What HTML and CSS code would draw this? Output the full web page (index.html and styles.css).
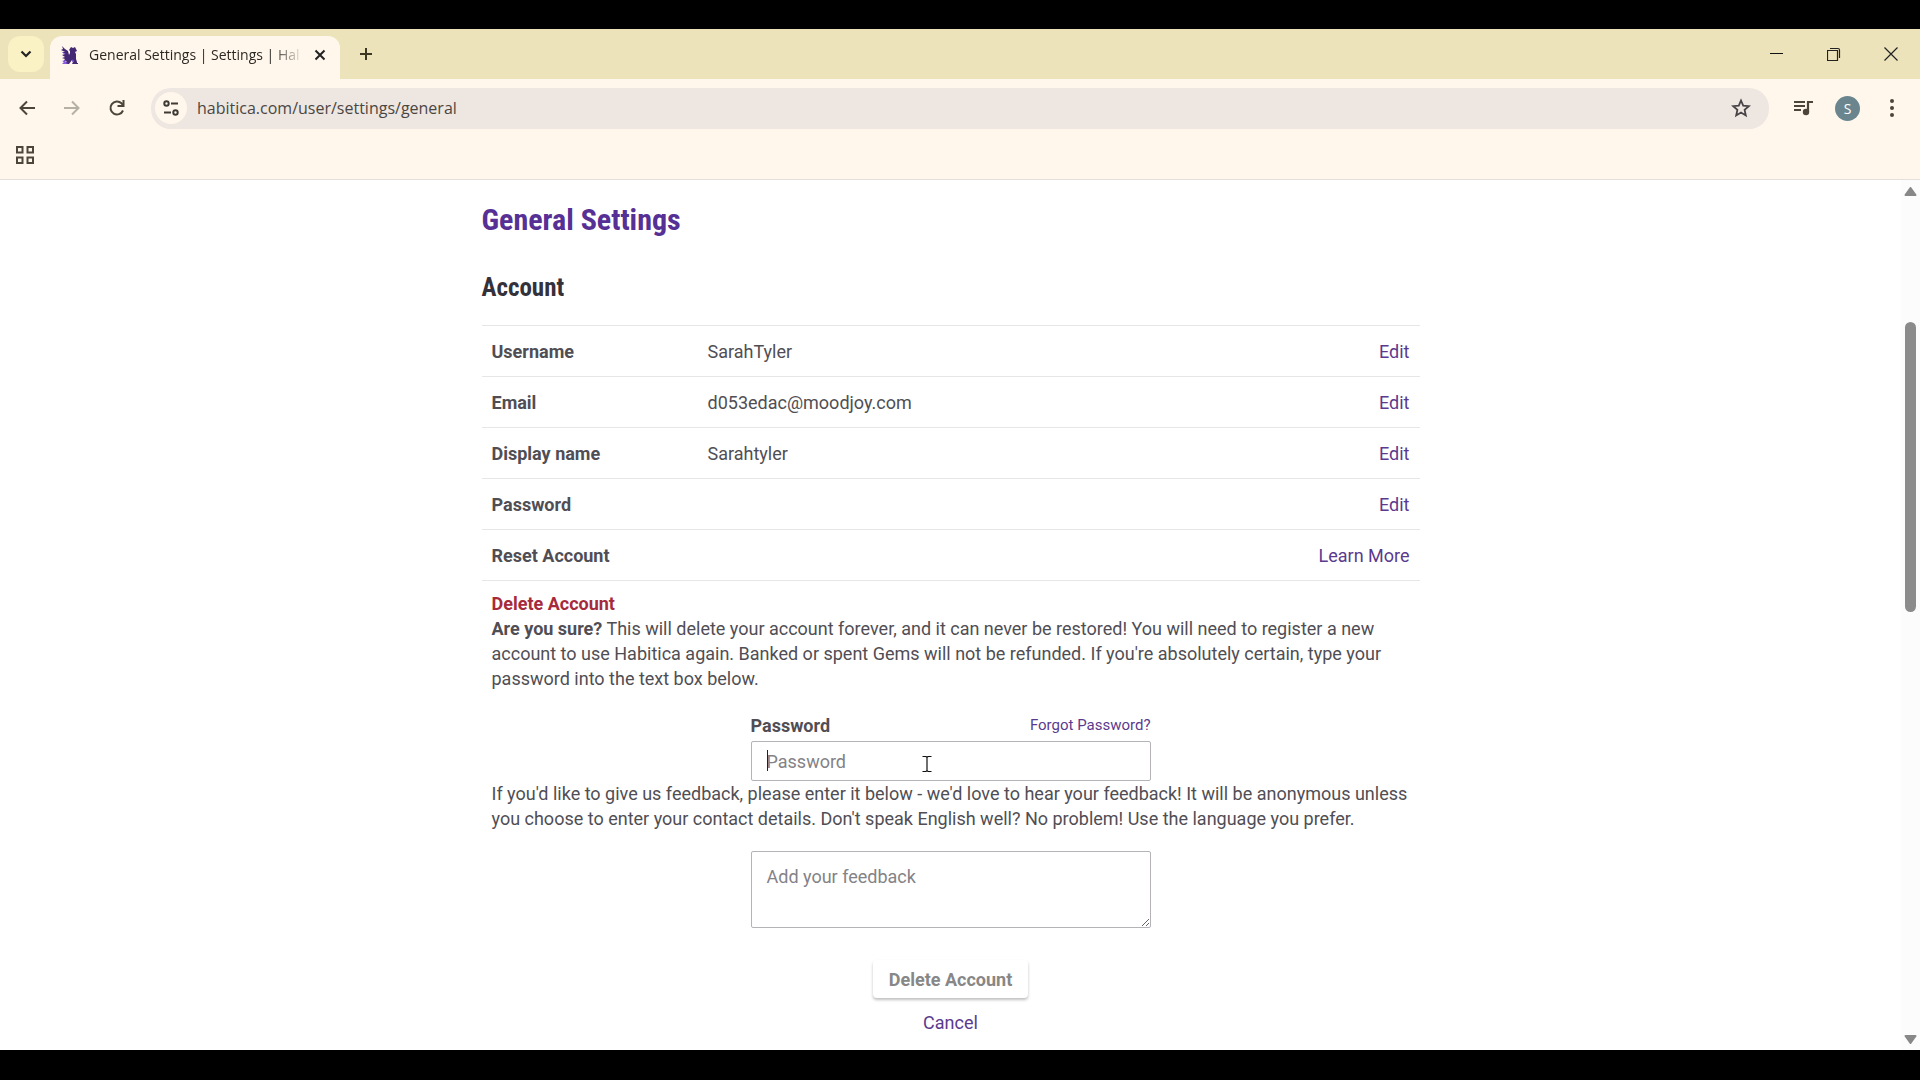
FILE: index.html
```html
<!DOCTYPE html>
<html lang="en">
<head>
    <meta charset="UTF-8">
    <meta name="viewport" content="width=device-width, initial-scale=1.0">
    <title>General Settings | Settings | Habitica</title>
    <link rel="stylesheet" href="styles.css">
</head>
<body>
    <div class="browser">
        <header class="chrome">
            <div class="tab-strip">
                <button type="button" class="tab-search" aria-label="Search tabs">
                    <svg width="12" height="8" viewBox="0 0 12 8"><path d="M1.5 1.5 6 6l4.5-4.5" fill="none" stroke="#222" stroke-width="2.2"/></svg>
                </button>
                <div class="tab">
                    <svg class="favicon" width="18" height="18" viewBox="0 0 18 18">
                        <path fill="#432874" d="M1 0l3 3 3 2 1 4 1-2V5L8 4l2-3 2 1 2-1 1 2 1 2-2 1 1 2v5l1 3v1h1v1h-6l1-2-1-2-3 4H4v-1l2-2-4 1 2-3-3-1 3-1-3-2 3-1-3-2h3L0 4l2-1z"/>
                        <path fill="#8a5ae0" d="M1 15l4-1-1 2 3 1-2 1H1l2-2zM12 13l1 3h-2zM1 6l4 2H3z"/>
                    </svg>
                    <span class="tab-title">General Settings | Settings | Hal</span>
                    <button type="button" class="icon-button" aria-label="Close tab">
                        <svg width="12" height="12" viewBox="0 0 12 12"><path d="M1.5 1.5l9 9M10.5 1.5l-9 9" stroke="#222" stroke-width="2"/></svg>
                    </button>
                </div>
                <button type="button" class="icon-button new-tab" aria-label="New tab">
                    <svg width="14" height="14" viewBox="0 0 14 14"><path d="M7 1v12M1 7h12" stroke="#3c3822" stroke-width="2"/></svg>
                </button>
                <div class="window-controls">
                    <button type="button" class="icon-button" aria-label="Minimize">
                        <svg width="14" height="14" viewBox="0 0 14 14"><path d="M0 6.5h13" stroke="#111"/></svg>
                    </button>
                    <button type="button" class="icon-button" aria-label="Restore">
                        <svg width="14" height="14" viewBox="0 0 14 14"><path d="M.5 3.5h10v10H.5zM3 1.5h8q1.500 0 1.500 1.500v8" fill="none" stroke="#222" stroke-width="1.2"/></svg>
                    </button>
                    <button type="button" class="icon-button" aria-label="Close">
                        <svg width="14" height="14" viewBox="0 0 14 14"><path d="M.5.5l13 13M13.5.5l-13 13" stroke="#222" stroke-width="1.2"/></svg>
                    </button>
                </div>
            </div>

            <div class="toolbar">
                <button type="button" class="icon-button" aria-label="Back">
                    <svg width="16" height="16" viewBox="0 0 16 16"><path d="M16 8H2M8 1.5 1.5 8 8 14.5" fill="none" stroke="#4c463a" stroke-width="2"/></svg>
                </button>
                <button type="button" class="icon-button" aria-label="Forward">
                    <svg width="16" height="16" viewBox="0 0 16 16"><path d="M0 8h14M8 1.5 14.5 8 8 14.5" fill="none" stroke="#b5b0a4" stroke-width="2"/></svg>
                </button>
                <button type="button" class="icon-button" aria-label="Reload">
                    <svg width="18" height="18" viewBox="0 0 18 18"><path d="M15 11.5A6.5 6.5 0 1 1 13.5 4.3L15.5 6.5" fill="none" stroke="#4c463a" stroke-width="2"/><path d="M16.5 1v7H9.5V6h5V1z" fill="#4c463a"/></svg>
                </button>
                <div class="address-bar">
                    <button type="button" class="site-info" aria-label="View site information">
                        <svg width="16" height="16" viewBox="0 0 16 16" fill="none" stroke="#3e3a34" stroke-width="2"><circle cx="3.5" cy="3.5" r="2.2"/><path d="M8 3.5h7M1 12.5h7"/><circle cx="12.5" cy="12.5" r="2.2"/></svg>
                    </button>
                    <input type="text" class="address" aria-label="Address" value="habitica.com/user/settings/general">
                    <button type="button" class="icon-button" aria-label="Bookmark this page">
                        <svg width="20" height="20" viewBox="0 0 20 20"><path d="M10 2.5l2.2 5.2 5.6.5-4.2 3.7 1.2 5.5-4.8-2.9-4.8 2.9 1.2-5.5L2.2 8.2l5.6-.5z" fill="none" stroke="#474347" stroke-width="1.8"/></svg>
                    </button>
                </div>
                <button type="button" class="icon-button media" aria-label="Media controls">
                    <svg width="20" height="16" viewBox="0 0 20 16"><path d="M1 2h11M1 6h11M1 10h7" stroke="#4c463a" stroke-width="2"/><circle cx="13" cy="12" r="3.2" fill="#4c463a"/><path d="M15 12V2h5" fill="none" stroke="#4c463a" stroke-width="2.2"/></svg>
                </button>
                <button type="button" class="avatar" aria-label="Profile">S</button>
                <button type="button" class="icon-button menu" aria-label="Menu">
                    <svg width="4" height="18" viewBox="0 0 4 18" fill="#4c463a"><circle cx="2" cy="2" r="2"/><circle cx="2" cy="9" r="2"/><circle cx="2" cy="16" r="2"/></svg>
                </button>
            </div>

            <div class="bookmarks">
                <button type="button" class="icon-button" aria-label="Apps">
                    <svg width="18" height="18" viewBox="0 0 18 18"><path d="M1 1h5.5v5.5H1zM11.5 1H17v5.5h-5.5zM1 11.5h5.5V17H1zM11.5 11.5H17V17h-5.5z" fill="none" stroke="#4c463a" stroke-width="2"/></svg>
                </button>
            </div>
        </header>

        <div class="viewport">
            <main class="page">
                <div class="settings">
                    <h1>General Settings</h1>
                    <h2>Account</h2>

                    <table class="account-table">
                        <tr><th scope="row">Username</th><td>SarahTyler</td><td class="action"><a href="#">Edit</a></td></tr>
                        <tr><th scope="row">Email</th><td>d053edac@moodjoy.com</td><td class="action"><a href="#">Edit</a></td></tr>
                        <tr><th scope="row">Display name</th><td>Sarahtyler</td><td class="action"><a href="#">Edit</a></td></tr>
                        <tr><th scope="row">Password</th><td></td><td class="action"><a href="#">Edit</a></td></tr>
                        <tr><th scope="row">Reset Account</th><td></td><td class="action"><a href="#">Learn More</a></td></tr>
                    </table>

                    <form class="delete-account">
                        <h3>Delete Account</h3>
                        <p><strong>Are you sure?</strong> This will delete your account forever, and it can never be restored! You will need to register a new account to use Habitica again. Banked or spent Gems will not be refunded. If you're absolutely certain, type your password into the text box below.</p>

                        <div class="field password-field">
                            <div class="field-head">
                                <label for="password">Password</label>
                                <a href="#" class="forgot">Forgot Password?</a>
                            </div>
                            <div class="input-wrap">
                                <input type="password" id="password" placeholder="Password">
                                <span class="caret"></span>
                                <svg class="pointer" width="10" height="18" viewBox="0 0 10 18"><path d="M.5 1.5h3.500l1 1 1-1h3.500M5 2v14M.5 16.500h3.500l1-1 1 1h3.500" fill="none" stroke="#111" stroke-width="1.2"/></svg>
                            </div>
                        </div>

                        <p>If you'd like to give us feedback, please enter it below - we'd love to hear your feedback! It will be anonymous unless you choose to enter your contact details. Don't speak English well? No problem! Use the language you prefer.</p>

                        <div class="field feedback-field">
                            <textarea aria-label="Feedback" placeholder="Add your feedback"></textarea>
                        </div>

                        <div class="buttons">
                            <button type="submit" class="delete-button" disabled>Delete Account</button>
                            <a href="#">Cancel</a>
                        </div>
                    </form>
                </div>
            </main>

            <div class="scrollbar">
                <svg width="13" height="9" viewBox="0 0 13 9"><path d="M6.5 1l5 7h-10z" fill="#888" stroke="#888" stroke-width="2" stroke-linejoin="round"/></svg>
                <div class="scroll-track"><div class="scroll-thumb"></div></div>
                <svg width="13" height="9" viewBox="0 0 13 9"><path d="M6.5 8l5-7h-10z" fill="#888" stroke="#888" stroke-width="2" stroke-linejoin="round"/></svg>
            </div>
        </div>
    </div>
</body>
</html>
```
FILE: styles.css
```css
* {
    box-sizing: border-box;
}

body {
    margin: 0;
    background-color: #000;
    font-family: Roboto, sans-serif;
    font-size: 18px;
    line-height: 25px;
    color: #504e54;
}

button {
    padding: 0;
    border: none;
    background: none;
    font-family: inherit;
    cursor: pointer;
}

svg {
    display: block;
}

a {
    color: #5b3a8e;
    text-decoration: none;
}

.browser {
    display: flex;
    flex-direction: column;
    height: 100vh;
    padding: 29px 0 30px;
}

/* browser bars */
.chrome {
    background-color: #fff7ec;
    border-bottom: 1px solid #e6e0dc;
    font-family: "Open Sans", "Noto Sans", sans-serif;
}

.tab-strip {
    display: flex;
    align-items: center;
    height: 50px;
    padding: 0 13px 0 8px;
    background-color: #ece3bb;
}

.icon-button {
    display: flex;
    flex: none;
    align-items: center;
    justify-content: center;
    width: 32px;
    height: 32px;
}

.tab-search {
    display: flex;
    align-items: center;
    justify-content: center;
    width: 36px;
    height: 36px;
    border-radius: 12px;
    background-color: #faf1c4;
}

.tab {
    display: flex;
    align-self: flex-end;
    align-items: center;
    width: 290px;
    height: 43px;
    margin-left: 6px;
    padding: 0 4px 6px 11px;
    border-radius: 12px 12px 0 0;
    background-color: #fff7ec;
}

.tab-title {
    flex: 1;
    margin-left: 10px;
    white-space: nowrap;
    font-size: 14px;
    color: #2c2823;
    mask-image: linear-gradient(to right, #000 85%, transparent);
}

.new-tab {
    margin-left: 10px;
}

.window-controls {
    display: flex;
    gap: 25px;
    margin-left: auto;
}

.toolbar {
    display: flex;
    align-items: center;
    gap: 13px;
    height: 58px;
    padding: 0 12px 0 11px;
}

.address-bar {
    display: flex;
    flex: 1;
    align-items: center;
    height: 41px;
    margin-left: 5px;
    padding: 0 12px 0 4px;
    border-radius: 20px;
    background-color: #eee6e1;
}

.site-info {
    display: flex;
    align-items: center;
    justify-content: center;
    width: 32px;
    height: 32px;
    border-radius: 50%;
    background-color: #fff7ec;
}

.address {
    flex: 1;
    padding: 0 10px;
    border: none;
    outline: none;
    background: none;
    font-family: inherit;
    font-size: 16px;
    color: #4b4642;
}

.media {
    margin-left: 5px;
}

.avatar {
    width: 25px;
    height: 25px;
    margin: 0 3px;
    border-radius: 50%;
    background-color: #6b858f;
    color: #fff;
    font-size: 14px;
}

.bookmarks {
    display: flex;
    align-items: center;
    height: 42px;
    padding: 0 9px 6px;
}

/* page */
.viewport {
    display: flex;
    flex: 1;
    min-height: 0;
    background-color: #fff;
}

.page {
    flex: 1;
    overflow: hidden;
}

.settings {
    max-width: 938px;
    margin: 0 auto;
}

h1,
h2 {
    margin: 0;
    font-family: "Roboto Condensed", Roboto, sans-serif;
    font-weight: 700;
}

h1 {
    padding-top: 20px;
    font-size: 30px;
    line-height: 40px;
    color: #563095;
}

h2 {
    padding: 33px 0 22px;
    font-size: 25px;
    line-height: 30px;
    color: #34313a;
}

.account-table {
    width: 100%;
    border-collapse: collapse;
}

.account-table tr {
    border-top: 1px solid #e6e6e8;
    border-bottom: 1px solid #e6e6e8;
}

.account-table th,
.account-table td {
    height: 51px;
    padding: 0 10px;
    text-align: left;
}

.account-table th {
    width: 216px;
}

.account-table .action {
    text-align: right;
}

.delete-account {
    padding: 10px;
}

h3 {
    margin: 0;
    font-size: 18px;
    line-height: 25px;
    color: #a62a3b;
}

p {
    margin: 0;
}

.field {
    width: 400px;
    max-width: 100%;
    margin: 0 auto;
}

.password-field {
    padding-top: 22px;
}

.feedback-field {
    padding-top: 20px;
}

.field-head {
    display: flex;
    align-items: center;
    justify-content: space-between;
    padding-bottom: 3px;
}

.field-head label {
    font-weight: 700;
}

.forgot {
    font-size: 15px;
}

.input-wrap {
    position: relative;
}

.input-wrap input,
textarea {
    display: block;
    width: 100%;
    border: 1px solid #b5b3b8;
    border-radius: 2px;
    outline: none;
    background-color: #fff;
    font-family: inherit;
    font-size: 18px;
    line-height: 25px;
    color: #504e54;
}

.input-wrap input {
    height: 40px;
    padding: 0 15px;
}

textarea {
    height: 77px;
    padding: 12px 15px;
}

::placeholder {
    color: #848286;
}

.caret {
    position: absolute;
    top: 9px;
    left: 16px;
    width: 1px;
    height: 21px;
    background-color: #222;
}

.pointer {
    position: absolute;
    top: 14px;
    left: 171px;
}

.buttons {
    display: flex;
    flex-direction: column;
    align-items: center;
    gap: 12px;
    padding-top: 32px;
}

.delete-button {
    height: 38px;
    padding: 0 16px;
    border-radius: 4px;
    background-color: #fff;
    box-shadow: 0 2px 3px #00000040;
    font-size: 18px;
    font-weight: 700;
    color: #878787;
}

.scrollbar {
    display: flex;
    flex-direction: column;
    align-items: center;
    width: 19px;
    padding: 7px 0 6px;
    background-color: #fcfcfc;
}

.scroll-track {
    flex: 1;
    padding-top: 126px;
}

.scroll-thumb {
    width: 11px;
    height: 35%;
    min-height: 290px;
    border-radius: 6px;
    background-color: #8b8b8b;
}
```
